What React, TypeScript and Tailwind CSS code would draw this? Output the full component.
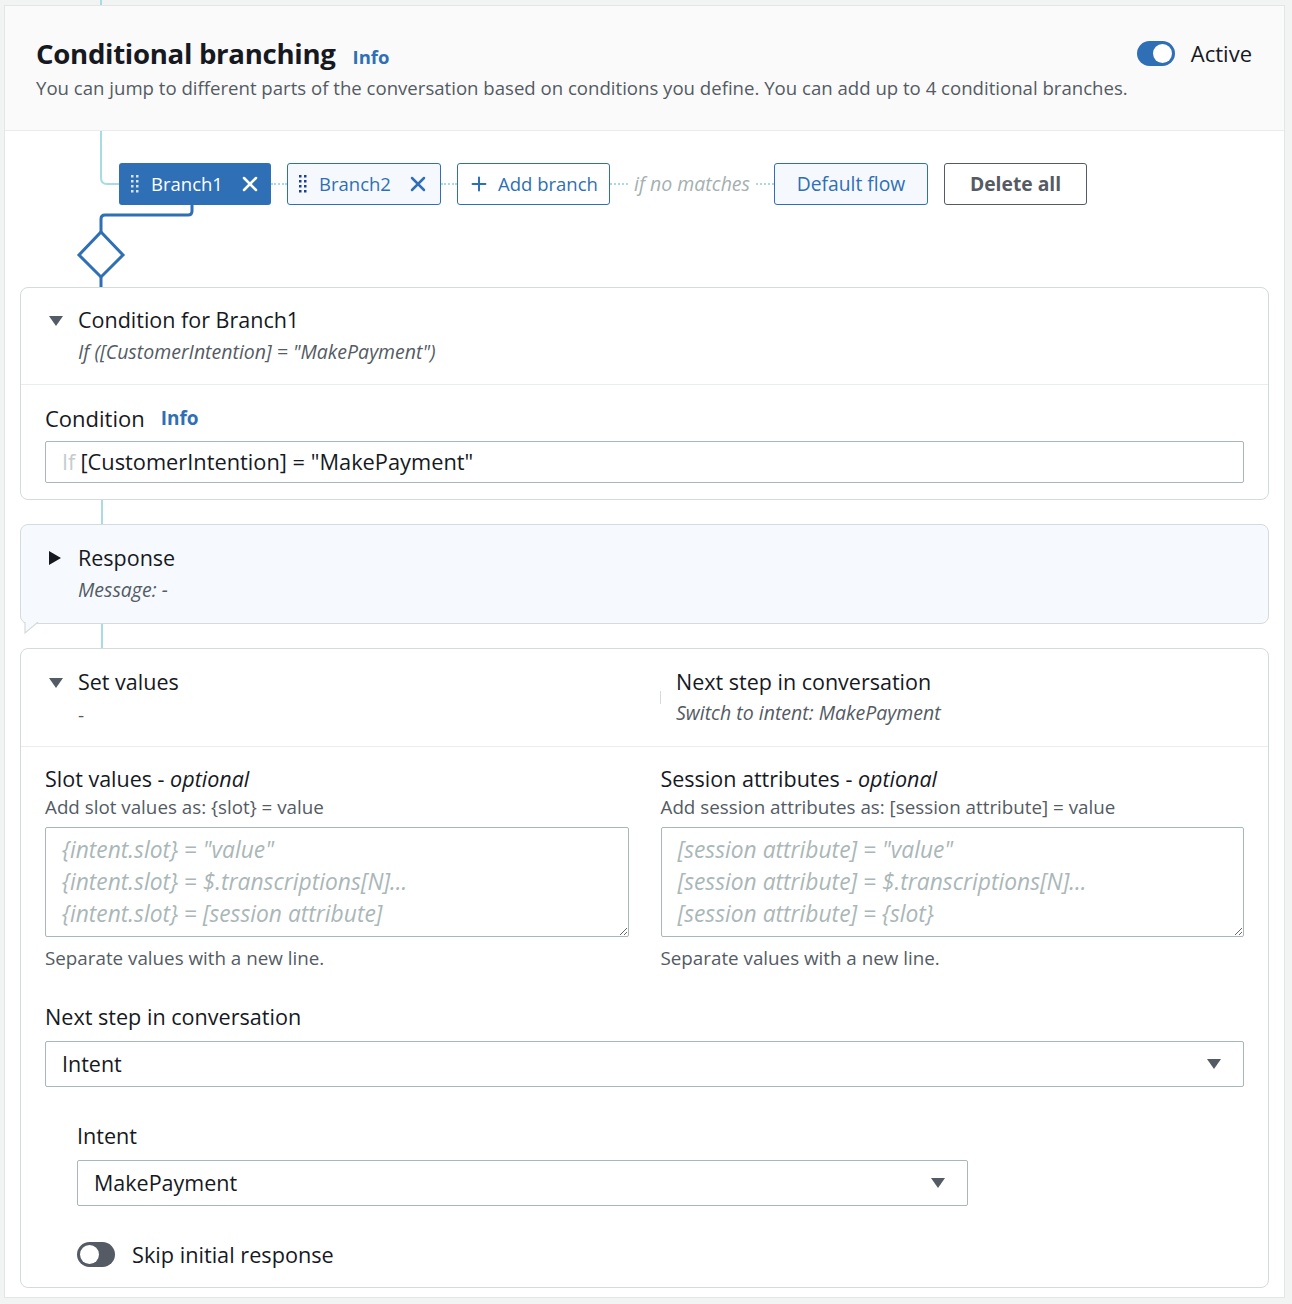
import { Plus, X } from 'lucide-react'

const BLUE = '#2f6fb5'

const DragDots = ({ className }: { className?: string }) => (
  <svg width="8" height="18" viewBox="0 0 8 18" className={className}>
    {[0, 1, 2, 3].map(r =>
      [0, 1].map(c => <rect key={`${r}-${c}`} x={c * 5} y={r * 5} width="2.5" height="2.5" fill="currentColor" />),
    )}
  </svg>
)

const Dotted = ({ w }: { w: string }) => <div className={`${w} border-t-2 border-dotted border-[#a9dbe3]`} />

const CaretDown = ({ className }: { className?: string }) => (
  <svg width="16" height="12" viewBox="0 0 16 12" className={className}>
    <path d="M1 1h14L8 11z" fill="currentColor" />
  </svg>
)

const Toggle = ({ on }: { on: boolean }) =>
  on ? (
    <div className="w-[38px] h-[25px] rounded-full bg-[#2f6fb5] flex items-center justify-end pr-[3px]">
      <div className="w-[19px] h-[19px] rounded-full bg-white" />
    </div>
  ) : (
    <div className="w-[38px] h-[25px] rounded-full bg-[#545b64] flex items-center pl-[3px]">
      <div className="w-[19px] h-[19px] rounded-full bg-white" />
    </div>
  )

const Select = ({ value }: { value: string }) => (
  <div className="h-[46px] border border-[#aab7b8] rounded-[2px] bg-white flex items-center justify-between pl-[16px] pr-[21px]">
    <span className="text-[21.5px] text-[#16191f]">{value}</span>
    <CaretDown className="text-[#545b64]" />
  </div>
)

const Textarea = ({ placeholder }: { placeholder: string }) => (
  <textarea
    placeholder={placeholder}
    className="block w-full h-[110px] border border-[#aab7b8] rounded-[2px] px-[16px] pt-[6px] text-[22.8px] leading-[32px] outline-none resize-y placeholder:italic placeholder:text-[#aab7b8]"
  />
)

const App = () => {
  return (
    <div
      className="min-h-[1304px] bg-[#f2f3f3] text-[#16191f]"
      style={{ fontFamily: '"Open Sans", "Noto Sans", sans-serif' }}
    >
      <div className="h-[5px]">
        <div className="ml-[100px] w-[2px] h-full bg-[#a9dbe3]" />
      </div>
      <div className="ml-[4px] w-[1281px] border border-[#e3e6e6] bg-white pb-[9px]">
        {/* header */}
        <div className="bg-[#fafafa] border-b border-[#e9ebed] pl-[31px] pr-[32px] pt-[29px] pb-[29px]">
          <div className="flex items-center justify-between h-[36px]">
            <div className="flex items-baseline h-[36px]">
              <h1 className="text-[27.6px] font-bold leading-[36px] tracking-[-0.3px]">Conditional branching</h1>
              <span className="ml-[17px] text-[18.5px] font-bold text-[#2f6fb5]">Info</span>
            </div>
            <div className="flex items-center gap-[16px]">
              <Toggle on />
              <span className="text-[22px]">Active</span>
            </div>
          </div>
          <p className="mt-[4px] text-[18.6px] leading-[26px] text-[#545b64]">
            You can jump to different parts of the conversation based on conditions you define. You can add up to 4
            conditional branches.
          </p>
        </div>

        {/* branch flow */}
        <div className="relative h-[156px] pt-[32px] pl-[114px]">
          <svg className="absolute inset-0" width="1279" height="156" fill="none">
            <path d="M96 0V47Q96 53 102 53H114" stroke="#a9dbe3" strokeWidth="2" />
            <path d="M187 74V80Q187 84 183 84H100Q96 84 96 88V101" stroke={BLUE} strokeWidth="3" />
            <path d="M96 101L118 124L96 146L74 124Z" stroke={BLUE} strokeWidth="3" fill="white" />
            <path d="M96 146V156" stroke={BLUE} strokeWidth="3" />
          </svg>
          <div className="relative flex items-center h-[42px]">
            <div className="h-[42px] w-[152px] rounded-[3px] bg-[#2f6fb5] text-white flex items-center pl-[12px]">
              <DragDots className="text-white opacity-80" />
              <span className="ml-[12px] text-[18.5px]">Branch1</span>
              <X size={24} strokeWidth={2.5} className="ml-[15px]" />
            </div>
            <Dotted w="w-[16px]" />
            <div className="h-[42px] w-[154px] rounded-[3px] border border-[#2f6fb5] bg-[#f5f9fe] text-[#2f6fb5] flex items-center pl-[11px]">
              <DragDots className="text-[#1a3f9a]" />
              <span className="ml-[12px] text-[18.5px]">Branch2</span>
              <X size={24} strokeWidth={2.5} className="ml-[15px]" />
            </div>
            <Dotted w="w-[16px]" />
            <div className="h-[42px] w-[153px] rounded-[3px] border border-[#2f6fb5] bg-white text-[#2f6fb5] flex items-center pl-[10px]">
              <Plus size={22} strokeWidth={2.2} />
              <span className="ml-[8px] text-[18.5px]">Add branch</span>
            </div>
            <Dotted w="w-[18px]" />
            <span className="ml-[6px] mr-[6px] text-[19.5px] italic text-[#a4b0b1]">if no matches</span>
            <Dotted w="w-[18px]" />
            <div className="h-[42px] w-[154px] rounded-[3px] border border-[#2f6fb5] bg-[#f5f9fe] text-[#2f6fb5] flex items-center justify-center">
              <span className="text-[19.3px]">Default flow</span>
            </div>
            <div className="ml-[16px] h-[42px] w-[143px] rounded-[3px] border border-[#545b64] bg-white text-[#545b64] flex items-center justify-center">
              <span className="text-[19.3px] font-bold">Delete all</span>
            </div>
          </div>
        </div>

        {/* cards */}
        <div className="px-[15px]">
          <div className="border border-[#d5dbdb] rounded-[8px] bg-white">
            <div className="flex items-start pl-[27px] pt-[18px] pb-[18px] border-b border-[#eaeded]">
              <CaretDown className="mt-[9px] text-[#545b64]" />
              <div className="ml-[14px]">
                <div className="text-[21.5px] leading-[28px]">Condition for Branch1</div>
                <div className="mt-[4px] text-[19.5px] leading-[28px] italic text-[#545b64]">
                  If ([CustomerIntention] = "MakePayment")
                </div>
              </div>
            </div>
            <div className="px-[24px] pt-[19px] pb-[16px]">
              <div className="flex items-center h-[28px]">
                <span className="text-[22px] leading-[28px]">Condition</span>
                <span className="ml-[16px] text-[19px] leading-[28px] font-bold text-[#2f6fb5]">Info</span>
              </div>
              <div className="mt-[9px] h-[42px] border border-[#aab7b8] rounded-[2px] flex items-center pl-[16px] text-[21.8px]">
                <span className="text-[#c4cccd]">If</span>
                <span className="ml-[5px]">[CustomerIntention] = "MakePayment"</span>
              </div>
            </div>
          </div>

          <div className="ml-[81px] w-[2px] h-[24px] bg-[#a9dbe3]" />

          <div className="relative border border-[#d5dbdb] rounded-[8px] bg-[#f6fafe]">
            <div className="flex items-start pl-[27px] pt-[19px] pb-[19px]">
              <svg width="14" height="16" viewBox="0 0 14 16" className="mt-[6px]">
                <path d="M1 1L13 8L1 15Z" fill="#16191f" />
              </svg>
              <div className="ml-[16px]">
                <div className="text-[21.5px] leading-[28px]">Response</div>
                <div className="mt-[4px] text-[19.5px] leading-[28px] italic text-[#545b64]">Message: -</div>
              </div>
            </div>
            <svg className="absolute left-[3px] bottom-[-11px]" width="16" height="12" viewBox="0 0 16 12">
              <path d="M1 0V11L14 0" fill="#f6fafe" stroke="#d5dbdb" strokeWidth="1.2" />
            </svg>
          </div>

          <div className="ml-[81px] w-[2px] h-[24px] bg-[#a9dbe3]" />

          <div className="border border-[#d5dbdb] rounded-[8px] bg-white">
            <div className="flex items-start pt-[19px] pb-[17px] border-b border-[#eaeded]">
              <div className="w-[639px] flex items-start pl-[27px]">
                <CaretDown className="mt-[9px] text-[#545b64]" />
                <div className="ml-[14px]">
                  <div className="text-[21.5px] leading-[28px]">Set values</div>
                  <div className="mt-[5px] text-[19px] leading-[28px] text-[#545b64]">-</div>
                </div>
              </div>
              <div className="flex items-start">
                <div className="mt-[23px] w-[1px] h-[13px] bg-[#d5dbdb]" />
                <div className="ml-[15px]">
                  <div className="text-[21.5px] leading-[28px]">Next step in conversation</div>
                  <div className="mt-[3px] text-[19.5px] leading-[28px] italic text-[#545b64]">
                    Switch to intent: MakePayment
                  </div>
                </div>
              </div>
            </div>

            <div className="px-[24px] pt-[18px] pb-[20px]">
              <div className="grid grid-cols-2 gap-x-[32px]">
                <div>
                  <div className="text-[21.5px] leading-[28px]">
                    Slot values - <span className="italic">optional</span>
                  </div>
                  <div className="mt-[2px] text-[18.8px] leading-[24px] text-[#545b64]">
                    Add slot values as: {'{slot}'} = value
                  </div>
                  <div className="mt-[8px]">
                    <Textarea
                      placeholder={'{intent.slot} = "value"\n{intent.slot} = $.transcriptions[N]...\n{intent.slot} = [session attribute]'}
                    />
                  </div>
                  <div className="mt-[9px] text-[18.8px] leading-[24px] text-[#545b64]">Separate values with a new line.</div>
                </div>
                <div>
                  <div className="text-[21.5px] leading-[28px]">
                    Session attributes - <span className="italic">optional</span>
                  </div>
                  <div className="mt-[2px] text-[18.8px] leading-[24px] text-[#545b64]">
                    Add session attributes as: [session attribute] = value
                  </div>
                  <div className="mt-[8px]">
                    <Textarea
                      placeholder={
                        '[session attribute] = "value"\n[session attribute] = $.transcriptions[N]...\n[session attribute] = {slot}'
                      }
                    />
                  </div>
                  <div className="mt-[9px] text-[18.8px] leading-[24px] text-[#545b64]">Separate values with a new line.</div>
                </div>
              </div>

              <div className="mt-[33px] text-[21.6px] leading-[28px]">Next step in conversation</div>
              <div className="mt-[10px]">
                <Select value="Intent" />
              </div>

              <div className="pl-[32px]">
                <div className="mt-[35px] text-[21.6px] leading-[28px]">Intent</div>
                <div className="mt-[10px] w-[891px]">
                  <Select value="MakePayment" />
                </div>
                <div className="mt-[36px] flex items-center h-[25px]">
                  <Toggle on={false} />
                  <span className="ml-[17px] text-[21.7px] leading-[25px]">Skip initial response</span>
                </div>
              </div>
            </div>
          </div>
        </div>
      </div>
    </div>
  )
}

export default App
